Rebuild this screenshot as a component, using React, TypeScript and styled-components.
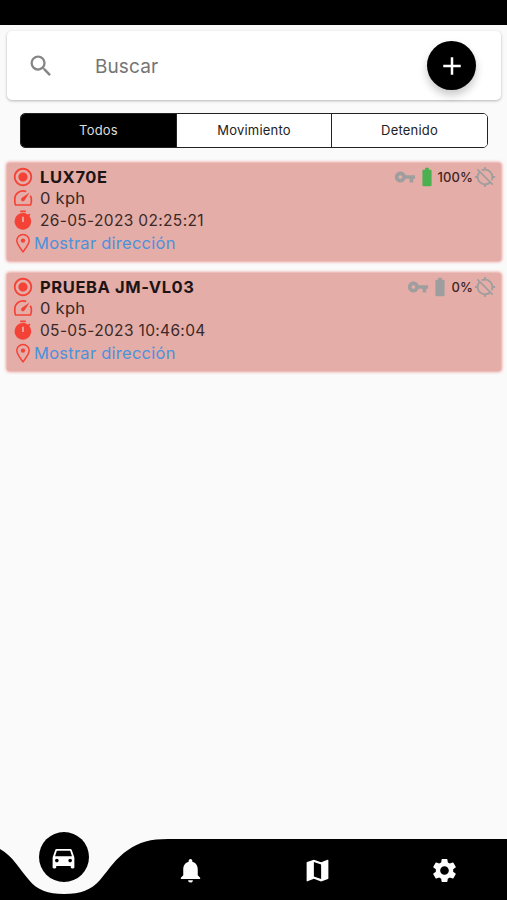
import React from "react";
import styled, { createGlobalStyle } from "styled-components";
import {
  MdSearch, MdAdd, MdRadioButtonChecked, MdVpnKey,
  MdBatteryFull, MdLocationDisabled, MdDirectionsCar, MdNotifications, MdMap, MdSettings,
} from "react-icons/md";

const GlobalStyle = createGlobalStyle`
  * { box-sizing: border-box; }
  body { margin: 0; background: #fafafa; font-family: Inter, "Liberation Sans", sans-serif; }
  svg { display: block; flex: none; }
`;

const Screen = styled.div`
  height: 900px;
  display: flex;
  flex-direction: column;
  overflow: hidden;
  background: #fafafa;
`;

const StatusBar = styled.div`
  height: 25px;
  flex: none;
  background: #000;
`;

const SearchCard = styled.div`
  height: 69px;
  flex: none;
  margin: 6px 6px 0 7px;
  padding: 0 25px 0 20px;
  display: flex;
  align-items: center;
  border-radius: 5px;
  background: #fff;
  color: #858585;
  box-shadow: 0 1px 3px rgba(0, 0, 0, 0.28);
`;

const SearchLabel = styled.span`
  flex: 1;
  margin: 2px 0 0 40px;
  color: #757575;
  font-size: 19px;
  line-height: 24px;
  letter-spacing: 0.1px;
`;

const AddButton = styled.button`
  width: 49px;
  height: 49px;
  padding: 0;
  border: 0;
  border-radius: 50%;
  display: grid;
  place-items: center;
  background: #000;
  color: #fff;
  box-shadow: 0 5px 8px rgba(0, 0, 0, 0.22);
`;

const Segments = styled.div`
  height: 35px;
  flex: none;
  margin: 13px 19px 0 20px;
  display: grid;
  grid-template-columns: 155px 155px 1fr;
  border: 1px solid #222;
  border-radius: 5px;
  overflow: hidden;
  background: #fff;
`;

const Segment = styled.button<{ $active?: boolean }>`
  border: 0;
  padding: 0 0 2px;
  font: 400 13px Inter, sans-serif;
  letter-spacing: 0.2px;
  background: ${(p) => (p.$active ? "#000" : "#fff")};
  color: ${(p) => (p.$active ? "#ddd" : "#222")};
  & + & { border-left: 1px solid #222; }
`;

const List = styled.div`
  flex: 1;
  padding: 15px 6px 0 7px;
  display: flex;
  flex-direction: column;
  gap: 12px;
`;

const Card = styled.article`
  height: 98px;
  padding: 3px 5px 0 5px;
  display: flex;
  justify-content: space-between;
  align-items: flex-start;
  border-radius: 3px;
  background: #e4ada8;
  box-shadow: 0 0 3px 1px rgba(232, 140, 134, 0.85);
`;

const Details = styled.div`
  display: grid;
  grid-template-rows: 21px 22px 22px 23px;
`;

const Line = styled.div<{ $gap?: number }>`
  display: flex;
  align-items: center;
  gap: ${(p) => p.$gap ?? 6}px;
  color: #f44336;
`;

const Name = styled.span`
  color: #1f1414;
  font-size: 16.5px;
  font-weight: 700;
  letter-spacing: 0.6px;
`;

const Value = styled.span<{ $small?: boolean }>`
  color: #3b2926;
  font-size: ${(p) => (p.$small ? 15.5 : 16.5)}px;
  letter-spacing: ${(p) => (p.$small ? 0.34 : 0.27)}px;
`;

const AddressLink = styled.a`
  color: #4b92dc;
  font-size: 16.5px;
  letter-spacing: 0.25px;
`;

const Indicators = styled.div`
  height: 22px;
  display: flex;
  align-items: center;
  color: #9e9e9e;
`;

const Level = styled.span`
  color: #3f2523;
  font-size: 13px;
  font-weight: 500;
  letter-spacing: 0.1px;
  margin-right: 1px;
`;

const Battery = styled(MdBatteryFull)<{ $charged: boolean }>`
  color: ${(p) => (p.$charged ? "#4caf50" : "#9e9e9e")};
`;

const NavBar = styled.nav`
  position: relative;
  height: 70px;
  flex: none;
  display: grid;
  grid-template-columns: repeat(4, 1fr);
  color: #fff;
`;

const NavShape = styled.svg`
  position: absolute;
  inset: 0;
`;

const NavItem = styled.button<{ $active?: boolean }>`
  position: relative;
  width: 50px;
  height: 50px;
  margin-top: ${(p) => (p.$active ? 2 : 15)}px;
  margin-left: 1px;
  padding: 0;
  justify-self: center;
  border: 0;
  border-radius: 50%;
  display: grid;
  place-items: center;
  background: ${(p) => (p.$active ? "#000" : "transparent")};
  color: #fff;
`;

function GaugeIcon() {
  return (
    <svg width="22" height="22" viewBox="0 0 22 22" fill="none" stroke="currentColor" strokeWidth="1.7">
      <path d="M14.2 4.5A8.2 8.2 0 0 0 2.8 12Q2.5 15 3.5 18H18.5Q19.8 15 19.3 11.5Q19 10 18.2 8.7" strokeLinejoin="round" />
      <path d="M17.6 5.5L12.5 13.4Q11 15.1 9.5 13.8Q8.2 12.3 10 10.8Z" fill="currentColor" stroke="none" />
    </svg>
  );
}

function TimerIcon() {
  return (
    <svg width="22" height="22" viewBox="0 0 22 22" fill="currentColor">
      <path fillRule="evenodd" d="M8.2 1.5H13.8V3.2H8.2ZM11 4C13 4 14.7 4.6 16 5.7L17.2 4.5L18.5 5.8L17.3 7A8.3 8.3 0 1 1 11 4ZM10.1 7.7V13H11.9V7.7Z" />
    </svg>
  );
}

function PinIcon() {
  return (
    <svg width="22" height="22" viewBox="0 0 22 22" fill="none" stroke="currentColor" strokeWidth="1.5">
      <path d="M11 19.8C9.5 17.7 4.8 12.5 4.8 8.6A6.2 6.2 0 0 1 17.2 8.6C17.2 12.5 12.5 17.7 11 19.8Z" />
      <circle cx="11" cy="8.6" r="2.2" fill="currentColor" stroke="none" />
    </svg>
  );
}

const vehicles = [
  { name: "LUX70E", date: "26-05-2023 02:25:21", level: 100 },
  { name: "PRUEBA JM-VL03", date: "05-05-2023 10:46:04", level: 0 },
];

function VehicleCard({ name, date, level }: (typeof vehicles)[number]) {
  return (
    <Card>
      <Details>
        <Line><MdRadioButtonChecked size={22} /><Name>{name}</Name></Line>
        <Line><GaugeIcon /><Value>0 kph</Value></Line>
        <Line><TimerIcon /><Value $small>{date}</Value></Line>
        <Line $gap={0}><PinIcon /><AddressLink>Mostrar dirección</AddressLink></Line>
      </Details>
      <Indicators>
        <MdVpnKey size={22} />
        <Battery size={22} $charged={level > 0} />
        <Level>{level}%</Level>
        <MdLocationDisabled size={22} />
      </Indicators>
    </Card>
  );
}

export default function App() {
  return (
    <Screen>
      <GlobalStyle />
      <StatusBar />
      <SearchCard>
        <MdSearch size={28} />
        <SearchLabel>Buscar</SearchLabel>
        <AddButton aria-label="Agregar"><MdAdd size={30} /></AddButton>
      </SearchCard>
      <Segments>
        <Segment $active>Todos</Segment>
        <Segment>Movimiento</Segment>
        <Segment>Detenido</Segment>
      </Segments>
      <List>{vehicles.map((v) => <VehicleCard key={v.name} {...v} />)}</List>
      <NavBar>
        <NavShape width="507" height="70" viewBox="0 0 507 70">
          <path d="M0 19C13 26 20 40 29 50C37 60 48 64 64 64C81 64 91 60 100 50C110 38 116 28 128 20C139 12 151 9 168 9H507V70H0Z" fill="#000" />
        </NavShape>
        <NavItem $active aria-label="Vehículos"><MdDirectionsCar size={29} /></NavItem>
        <NavItem aria-label="Alertas"><MdNotifications size={29} /></NavItem>
        <NavItem aria-label="Mapa"><MdMap size={29} /></NavItem>
        <NavItem aria-label="Ajustes"><MdSettings size={29} /></NavItem>
      </NavBar>
    </Screen>
  );
}
